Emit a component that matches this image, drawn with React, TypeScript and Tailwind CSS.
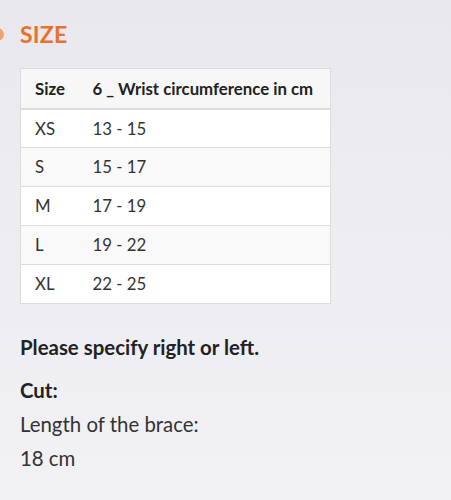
import React from "react";

const rows = [
  ["XS", "13 - 15"],
  ["S", "15 - 17"],
  ["M", "17 - 19"],
  ["L", "19 - 22"],
  ["XL", "22 - 25"],
];

export default function App() {
  return (
    <div
      className="relative w-[451px] h-[500px] overflow-hidden bg-gradient-to-b from-[#e8e8ee] to-[#f2f2f5] text-[#222]"
      style={{ fontFamily: "Lato, 'Noto Sans', sans-serif" }}
    >
      <div className="absolute left-[-9px] top-[28px] w-[13px] h-[13px] rounded-full bg-[#f0a370]" />
      <div className="pl-[20px] pt-[20px]">
        <h2 className="text-[23px] leading-[28px] font-bold text-[#e8722c] tracking-[0.2px]">SIZE</h2>
        <table className="mt-[20px] w-[311px] border-collapse border border-[#dcdcdc] bg-white text-[16.8px]">
          <thead>
            <tr className="bg-[#f7f7f7]">
              <th className="h-[40px] pl-[14px] w-[72px] text-left font-bold border-b-2 border-[#dcdcdc]">Size</th>
              <th className="h-[40px] text-left font-bold border-b-2 border-[#dcdcdc] whitespace-nowrap">6 _ Wrist circumference in cm</th>
            </tr>
          </thead>
          <tbody>
            {rows.map(([s, r], i) => (
              <tr key={s} className={i % 2 === 1 ? "bg-[#f9f9f9]" : "bg-white"}>
                <td className="h-[39px] pl-[14px] border-t border-[#dcdcdc] text-[#333]">{s}</td>
                <td className="h-[39px] border-t border-[#dcdcdc] text-[#333]">{r}</td>
              </tr>
            ))}
          </tbody>
        </table>
        <p className="mt-[30px] text-[20.4px] font-bold leading-[26px]">Please specify right or left.</p>
        <p className="mt-[17px] text-[20.4px] font-bold leading-[26px]">Cut:</p>
        <p className="mt-[8px] text-[20.4px] leading-[26px] text-[#333]">Length of the brace:</p>
        <p className="mt-[8px] text-[20.4px] leading-[26px] text-[#333]">18 cm</p>
      </div>
    </div>
  );
}
